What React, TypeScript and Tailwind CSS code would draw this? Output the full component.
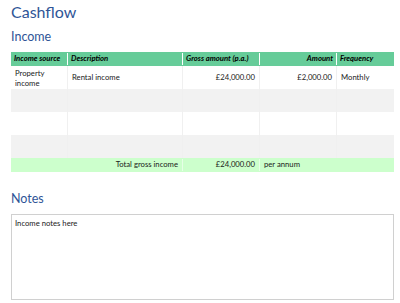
const rows = [
  { source: 'Property income', desc: 'Rental income', gross: '£24,000.00', amount: '£2,000.00', freq: 'Monthly' },
  { source: '', desc: '', gross: '', amount: '', freq: '' },
  { source: '', desc: '', gross: '', amount: '', freq: '' },
  { source: '', desc: '', gross: '', amount: '', freq: '' },
]

const cols = 'grid grid-cols-[57px_115px_77px_77px_57px]'

export default function App() {
  return (
    <div className="w-[400px] h-[303px] bg-white px-[11px] pt-[1px] text-[#1a1a1a] font-['Lato',sans-serif] overflow-hidden">
      <h1 className="text-[16px] leading-[22px] text-[#2f5597]">Cashflow</h1>
      <h2 className="mt-[5px] text-[12.5px] leading-[18px] text-[#2f5597]">Income</h2>

      {/* Income table */}
      <div className="mt-[6px] w-[383px] text-[7.7px] whitespace-nowrap">
        <div className={`${cols} h-[14px] bg-[#66cc99] text-black font-bold italic items-center`}>
          <div className="px-[3px] border-r border-white">Income source</div>
          <div className="px-[3px] border-r border-white">Description</div>
          <div className="px-[3px] border-r border-white">Gross amount (p.a.)</div>
          <div className="px-[3px] border-r border-white text-right">Amount</div>
          <div className="px-[3px]">Frequency</div>
        </div>
        {rows.map((r, i) => (
          <div key={i} className={`${cols} h-[23px] items-stretch ${i % 2 ? 'bg-[#f2f2f2]' : 'bg-white'}`}>
            <div className="px-[4px] flex items-center leading-[10px] whitespace-normal border-r border-[#f0f0f0]">{r.source}</div>
            <div className="px-[4px] flex items-center border-r border-[#f0f0f0]">{r.desc}</div>
            <div className="px-[4px] flex items-center justify-end border-r border-[#f0f0f0]">{r.gross}</div>
            <div className="px-[4px] flex items-center justify-end border-r border-[#f0f0f0]">{r.amount}</div>
            <div className="px-[4px] flex items-center">{r.freq}</div>
          </div>
        ))}
        <div className={`${cols} h-[14px] bg-[#ccffcc] items-center`}>
          <div />
          <div className="px-[4px] text-right border-r border-[#e6ffe6]">Total gross income</div>
          <div className="px-[4px] text-right border-r border-[#e6ffe6]">£24,000.00</div>
          <div className="px-[4px]">per annum</div>
          <div />
        </div>
      </div>

      <h2 className="mt-[18px] text-[12.5px] leading-[18px] text-[#2f5597]">Notes</h2>
      <div className="mt-[6px] w-[383px] h-[86px] border border-[#d0d0d0] px-[3px] pt-[3px] text-[7.7px]">
        Income notes here
      </div>
    </div>
  )
}
